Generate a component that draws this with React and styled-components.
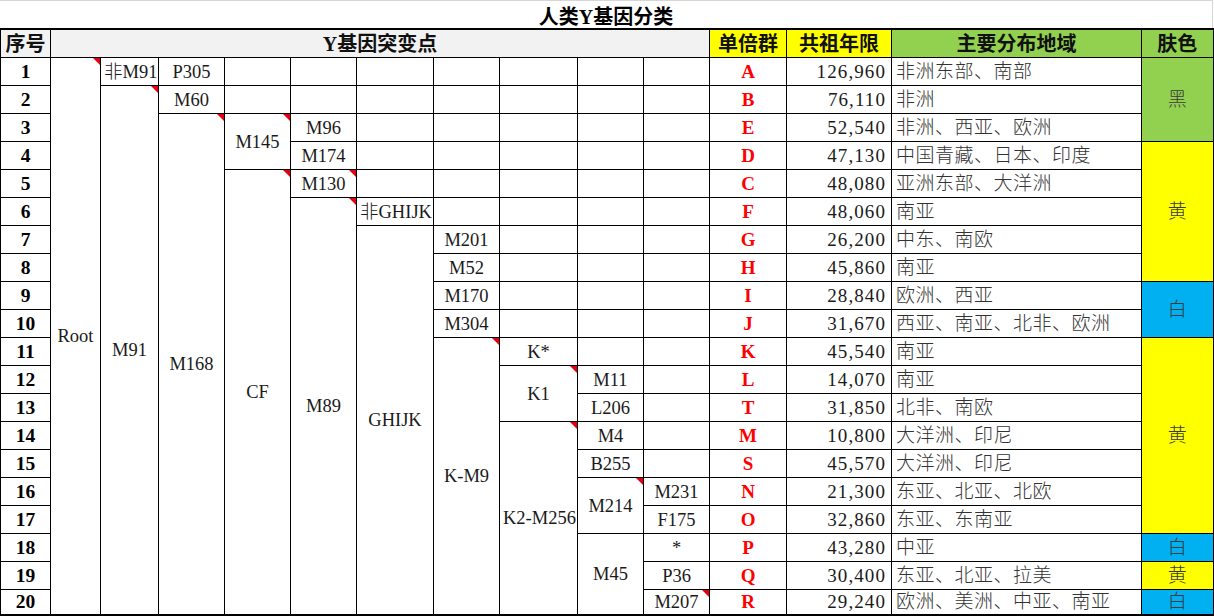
import React from 'react';
import styled, { createGlobalStyle } from 'styled-components';

const GlobalStyle = createGlobalStyle`
  html, body { margin: 0; padding: 0; background: #fff; }
  body { font-family: "Liberation Serif", "Noto Sans CJK SC", serif; color: #000; }
`;

const FONT = `"Liberation Serif", "Noto Sans CJK SC", serif`;

const Sheet = styled.div`
  width: 1214px;
`;

const Title = styled.div`
  height: 28px;
  box-sizing: border-box;
  border-top: 1px solid #d6d6d6;
  border-right: 1px solid #d6d6d6;
  width: 1213px;
  display: flex;
  align-items: center;
  justify-content: center;
  font-family: ${FONT};
  font-weight: bold;
  font-size: 20px;
  padding-top: 2px;
`;

const Table = styled.table`
  border-collapse: collapse;
  table-layout: fixed;
  width: 1213px;
  border-top: 2px solid #000;
  border-right: 2px solid #000;
  border-bottom: 2px solid #000;
  border-left: 1px solid #000;
  font-family: ${FONT};
  font-size: 19px;
`;

const Row = styled.tr`
  height: ${(p) => (p.$last ? '26px' : '28px')};
`;

const Cell = styled.td`
  position: relative;
  border: 1px solid #000;
  padding: 0 3px;
  line-height: 22px;
  vertical-align: middle;
  white-space: nowrap;
  overflow: visible;
  padding-top: 1px;
`;

const HeadCell = styled(Cell)`
  background: ${(p) => p.$bg};
  font-weight: bold;
  font-size: 20px;
  text-align: center;
  color: #111;
`;

const NumCell = styled(Cell)`
  font-weight: bold;
  text-align: center;
  font-size: 19.5px;
`;

const GeneCell = styled(Cell)`
  text-align: center;
  font-size: 18.5px;
  color: #1a1a1a;
  font-weight: 300;
`;

const HapCell = styled(Cell)`
  text-align: center;
  font-weight: bold;
  color: #f00;
`;

const AgeCell = styled(Cell)`
  text-align: right;
  padding-right: 5px;
  color: #1a1a1a;
  letter-spacing: 1.1px;
`;

const RegionCell = styled(Cell)`
  text-align: left;
  padding-left: 4px;
  color: #333;
  font-weight: 300;
  letter-spacing: 0.5px;
`;

const SkinCell = styled(Cell)`
  text-align: center;
  background: ${(p) => p.$tone};
  color: #3a3a3a;
  font-weight: 300;
`;

const Marker = styled.span`
  position: absolute;
  top: 0;
  right: 0;
  width: 0;
  height: 0;
  border-top: 7px solid #e3000f;
  border-left: 7px solid transparent;
`;

const WIDTHS = [50, 50, 58, 66, 66, 66, 77, 66, 78, 66, 66, 77, 105, 250, 72];

const GREEN = '#92d050';
const YELLOW = '#ffff00';
const BLUE = '#00b0f0';
const GRAY = '#f2f2f2';

// gene cells per row: [text, rowSpan, marker]
const E = ['', 1, false];
const empties = (n) => Array.from({ length: n }, () => E);

const GENES = [
  [['Root', 20, true], ['非M91', 1, false], ['P305', 1, false], ...empties(7)],
  [['M91', 19, true], ['M60', 1, false], ...empties(7)],
  [['M168', 18, true], ['M145', 2, true], ['M96', 1, false], ...empties(5)],
  [['M174', 1, false], ...empties(5)],
  [['CF', 16, true], ['M130', 1, true], ...empties(5)],
  [['M89', 15, true], ['非GHIJK', 1, false], ...empties(4)],
  [['GHIJK', 14, false], ['M201', 1, false], ...empties(3)],
  [['M52', 1, false], ...empties(3)],
  [['M170', 1, false], ...empties(3)],
  [['M304', 1, false], ...empties(3)],
  [['K-M9', 10, true], ['K*', 1, false], ...empties(2)],
  [['K1', 2, true], ['M11', 1, false], ...empties(1)],
  [['L206', 1, false], ...empties(1)],
  [['K2-M256', 7, true], ['M4', 1, false], ...empties(1)],
  [['B255', 1, false], ...empties(1)],
  [['M214', 2, true], ['M231', 1, false]],
  [['F175', 1, false]],
  [['M45', 3, false], ['*', 1, false]],
  [['P36', 1, false]],
  [['M207', 1, true]],
];

const DATA = [
  ['A', '126,960', '非洲东部、南部'],
  ['B', '76,110', '非洲'],
  ['E', '52,540', '非洲、西亚、欧洲'],
  ['D', '47,130', '中国青藏、日本、印度'],
  ['C', '48,080', '亚洲东部、大洋洲'],
  ['F', '48,060', '南亚'],
  ['G', '26,200', '中东、南欧'],
  ['H', '45,860', '南亚'],
  ['I', '28,840', '欧洲、西亚'],
  ['J', '31,670', '西亚、南亚、北非、欧洲'],
  ['K', '45,540', '南亚'],
  ['L', '14,070', '南亚'],
  ['T', '31,850', '北非、南欧'],
  ['M', '10,800', '大洋洲、印尼'],
  ['S', '45,570', '大洋洲、印尼'],
  ['N', '21,300', '东亚、北亚、北欧'],
  ['O', '32,860', '东亚、东南亚'],
  ['P', '43,280', '中亚'],
  ['Q', '30,400', '东亚、北亚、拉美'],
  ['R', '29,240', '欧洲、美洲、中亚、南亚'],
];

// skin cells keyed by starting row index
const SKIN = {
  0: ['黑', 3, GREEN],
  3: ['黄', 5, YELLOW],
  8: ['白', 2, BLUE],
  10: ['黄', 7, YELLOW],
  17: ['白', 1, BLUE],
  18: ['黄', 1, YELLOW],
  19: ['白', 1, BLUE],
};

export default function App() {
  return (
    <Sheet>
      <GlobalStyle />
      <Title>人类Y基因分类</Title>
      <Table>
        <colgroup>
          {WIDTHS.map((w, i) => (
            <col key={i} style={{ width: w }} />
          ))}
        </colgroup>
        <tbody>
          <Row>
            <HeadCell $bg={GRAY}>序号</HeadCell>
            <HeadCell $bg={GRAY} colSpan={10}>Y基因突变点</HeadCell>
            <HeadCell $bg={YELLOW}>单倍群</HeadCell>
            <HeadCell $bg={YELLOW}>共祖年限</HeadCell>
            <HeadCell $bg={GREEN}>主要分布地域</HeadCell>
            <HeadCell $bg={GREEN}>肤色</HeadCell>
          </Row>
          {DATA.map(([hap, age, region], i) => {
            const skin = SKIN[i];
            return (
              <Row key={i} $last={i === DATA.length - 1}>
                <NumCell>{i + 1}</NumCell>
                {GENES[i].map(([text, span, mark], j) => (
                  <GeneCell key={j} rowSpan={span > 1 ? span : undefined}>
                    {text}
                    {mark && <Marker />}
                  </GeneCell>
                ))}
                <HapCell>{hap}</HapCell>
                <AgeCell>{age}</AgeCell>
                <RegionCell>{region}</RegionCell>
                {skin && (
                  <SkinCell $tone={skin[2]} rowSpan={skin[1] > 1 ? skin[1] : undefined}>
                    {skin[0]}
                  </SkinCell>
                )}
              </Row>
            );
          })}
        </tbody>
      </Table>
    </Sheet>
  );
}
